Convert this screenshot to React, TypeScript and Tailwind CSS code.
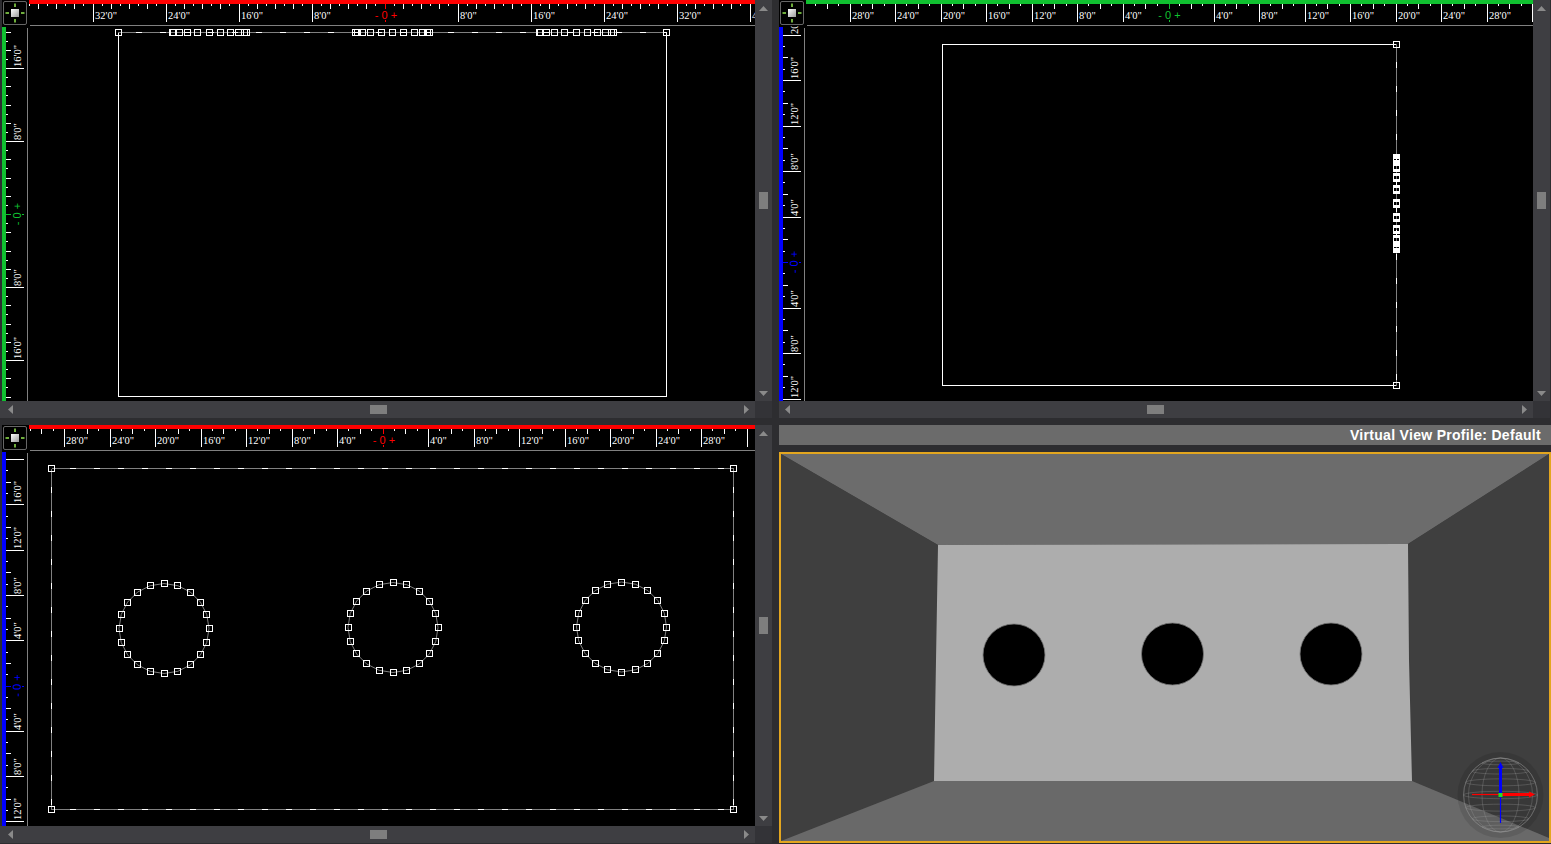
import React from 'react';

const GRAY = '#808080';
const textCls = "font-['Liberation_Serif',serif] text-[10.5px] fill-white";
const markCls = "font-['Liberation_Sans',sans-serif] text-[11px]";

function range(from: number, to: number) {
  return Array.from({ length: to - from + 1 }, (_, i) => from + i);
}

interface ScaleProps {
  center: number;
  step: number;
  unit: number;
  divs: number;
  color: string;
  barClass: string;
  hide?: number[];
}

function TopRuler({ x0, x1, y0, center, step, unit, divs, color, barClass, hide }: ScaleProps & { x0: number; x1: number; y0: number }) {
  const minor = step / divs;
  const n = Math.ceil((x1 - x0) / minor);
  const ticks = range(-n, n).filter((i) => {
    const x = center + i * minor;
    return x >= x0 && x < x1;
  });
  const majors = range(-12, 12).filter((k) => {
    const x = center + k * step;
    return k !== 0 && x >= x0 && x < x1;
  });
  return (
    <div className="flex-1 flex flex-col min-w-0">
      <div className={`h-[4px] shrink-0 ${barClass}`} />
      <svg className="block w-full h-[22px]" viewBox={`${x0} ${y0 + 4} ${x1 - x0} 22`} shapeRendering="crispEdges">
        {ticks.map((i) => {
          if (i % divs === 0) return null;
          const x = Math.floor(center + i * minor) + 0.5;
          return <line key={i} x1={x} x2={x} y1={y0 + 4} y2={y0 + (i % 2 === 0 ? 9 : 6)} stroke="#fff" />;
        })}
        {majors.map((k) => {
          const x = Math.floor(center + k * step) + 0.5;
          return (
            <g key={k}>
              <line x1={x} x2={x} y1={y0 + 4} y2={y0 + 22} stroke="#fff" />
              {!hide?.includes(k) && (
                <text x={x + 1.5} y={y0 + 19} className={textCls} shapeRendering="auto">{`${Math.abs(k) * unit}'0"`}</text>
              )}
            </g>
          );
        })}
        <line x1={center + 0.5} x2={center + 0.5} y1={y0 + 4} y2={y0 + 9} stroke={color} />
        <line x1={center + 0.5} x2={center + 0.5} y1={y0 + 20} y2={y0 + 22} stroke={color} />
        <text x={center + 1} y={y0 + 19} textAnchor="middle" xmlSpace="preserve" className={markCls} fill={color} shapeRendering="auto">- 0 +</text>
        <line x1={x0 + 1} x2={x1} y1={y0 + 25.5} y2={y0 + 25.5} stroke={GRAY} />
      </svg>
    </div>
  );
}

function LeftRuler({ y0, height, center, step, unit, divs, color, hide }: ScaleProps & { y0: number; height: number }) {
  const minor = step / divs;
  const n = Math.ceil(height / minor) + 40;
  const ticks = range(-n, n).filter((i) => {
    const y = center + i * minor;
    return y >= y0 && y < y0 + height;
  });
  const majors = range(-12, 12).filter((k) => {
    const y = center + k * step;
    return k !== 0 && y >= y0 && y < y0 + height;
  });
  return (
    <svg className="block w-[26px] shrink-0" height={height} viewBox={`0 ${y0} 26 ${height}`} shapeRendering="crispEdges">
      <rect x={0} y={y0 + 1} width={4} height={height} fill={color} />
      <line x1={25.5} x2={25.5} y1={y0 + 2} y2={y0 + height} stroke={GRAY} />
      {ticks.map((i) => {
        if (i % divs === 0) return null;
        const y = Math.round(center + i * minor) + 0.5;
        return <line key={i} x1={4} x2={i % 2 === 0 ? 9 : 6} y1={y} y2={y} stroke="#fff" />;
      })}
      {majors.map((k) => {
        const y = Math.round(center + k * step) + 0.5;
        return (
          <g key={k}>
            <line x1={4} x2={22} y1={y} y2={y} stroke="#fff" />
            {!hide?.includes(k) && (
              <text transform={`rotate(-90 19 ${y - 1.5})`} x={19} y={y - 1.5} className={textCls} shapeRendering="auto">{`${Math.abs(k) * unit}'0"`}</text>
            )}
          </g>
        );
      })}
      <line x1={4} x2={9} y1={center + 0.5} y2={center + 0.5} stroke={color} />
      <line x1={20} x2={22} y1={center + 0.5} y2={center + 0.5} stroke={color} />
      <text transform={`rotate(-90 19 ${center})`} x={19} y={center} textAnchor="middle" className={markCls} fill={color} shapeRendering="auto">- 0 +</text>
    </svg>
  );
}

function CornerButton({ id }: { id: string }) {
  return (
    <div className="w-[27px] h-[26px] shrink-0 pl-[1px] pt-[1px]">
      <svg width="24" height="24" viewBox="0 0 24 24" className="block">
        <rect x="0.5" y="0.5" width="23" height="23" rx="1.5" fill="#000" stroke="#666" />
        <defs>
          <linearGradient id={id} x1="0" y1="0" x2="1" y2="1">
            <stop offset="0" stopColor="#fff" />
            <stop offset="1" stopColor="#9a9a9a" />
          </linearGradient>
        </defs>
        <rect x="8" y="8" width="8" height="8" fill={`url(#${id})`} />
        <g stroke="#6fae3c" strokeWidth="2">
          <line x1="12" x2="12" y1="2.5" y2="6" />
          <line x1="12" x2="12" y1="18" y2="21.5" />
          <line x1="2.5" x2="6" y1="12" y2="12" />
          <line x1="18" x2="21.5" y1="12" y2="12" />
        </g>
      </svg>
    </div>
  );
}

function Arrow({ dir }: { dir: 'up' | 'down' | 'left' | 'right' }) {
  const pts = {
    up: '0,5 9,5 4.5,0',
    down: '0,0 9,0 4.5,5',
    left: '5,0 5,9 0,4.5',
    right: '0,0 0,9 5,4.5',
  }[dir];
  const horizontal = dir === 'left' || dir === 'right';
  return (
    <svg width={horizontal ? 5 : 9} height={horizontal ? 9 : 5} className="block shrink-0" fill="#8a8a8a">
      <polygon points={pts} />
    </svg>
  );
}

function VScroll() {
  return (
    <div className="w-[17px] shrink-0 bg-[#3e3e42] flex flex-col items-center justify-between pt-[6px] pb-[5px]">
      <Arrow dir="up" />
      <div className="w-[9px] h-[17px] mb-[1px] bg-[#7e7e7e]" />
      <Arrow dir="down" />
    </div>
  );
}

function HScroll({ strip }: { strip?: boolean }) {
  return (
    <div className={`h-[17px] flex-1 bg-[#3e3e42] flex items-center justify-between pr-[6px] ${strip ? 'pl-[8px]' : 'pl-[6px]'}`}>
      <Arrow dir="left" />
      <div className={`w-[17px] h-[9px] bg-[#7e7e7e] ${strip ? '' : 'mr-[2px]'}`} />
      <Arrow dir="right" />
    </div>
  );
}

function Handle({ x, y }: { x: number; y: number }) {
  return <rect x={Math.floor(x) - 3 + 0.5} y={Math.floor(y) - 3 + 0.5} width={6} height={6} fill="none" stroke="#fff" />;
}

function DashedEdge({ x1, y1, x2, y2 }: { x1: number; y1: number; x2: number; y2: number }) {
  return (
    <g>
      <line x1={x1} y1={y1} x2={x2} y2={y2} stroke={GRAY} />
      <line x1={x1} y1={y1} x2={x2} y2={y2} stroke="#fff" strokeDasharray="6 18" strokeDashoffset="6" />
    </g>
  );
}

const ringAngles = range(0, 19).map((i) => (i * Math.PI) / 10);

interface ViewPaneProps {
  id: string;
  ox: number;
  oy: number;
  width: number;
  strip?: boolean;
  h: ScaleProps;
  v: ScaleProps;
  children: React.ReactNode;
}

function ViewPane({ id, ox, oy, width, strip, h, v, children }: ViewPaneProps) {
  const right = ox + width - (strip ? 19 : 17);
  return (
    <div className="flex flex-col">
      <div className="flex h-[401px]">
        {strip && <div className="w-[2px] shrink-0 bg-[#2d2d30]" />}
        <div className="flex-1 flex flex-col bg-black min-w-0">
          <div className="flex h-[26px]">
            <CornerButton id={id} />
            <TopRuler x0={ox + 27} x1={right} y0={oy} {...h} />
          </div>
          <div className="flex flex-1">
            <LeftRuler y0={oy + 26} height={375} {...v} />
            <svg className="block flex-1 h-[375px]" viewBox={`${ox + 26} ${oy + 26} ${right - ox - 26} 375`} shapeRendering="crispEdges">
              {children}
            </svg>
          </div>
        </div>
        <VScroll />
      </div>
      <div className="flex h-[17px]">
        <HScroll strip={strip} />
        <div className="w-[17px] bg-[#333337]" />
      </div>
    </div>
  );
}

function Compass() {
  const cx = 1500.5;
  const cy = 795;
  const r = 37;
  return (
    <g>
      <circle cx={cx} cy={cy} r={43} fill="#000" fillOpacity="0.1" />
      <g fill="none" stroke="#9a9a9a" strokeOpacity="0.38" strokeWidth="0.8">
        <circle cx={cx} cy={cy} r={r} />
        {[30, 60, 85].map((a) => (
          <ellipse key={a} cx={cx} cy={cy} rx={r * Math.sin((a * Math.PI) / 180)} ry={r} />
        ))}
        {[-60, -40, -20, 0, 20, 40, 60].map((lat) => {
          const rad = (lat * Math.PI) / 180;
          return <ellipse key={lat} cx={cx} cy={cy + r * Math.sin(rad)} rx={r * Math.cos(rad)} ry={r * Math.cos(rad) * 0.1} />;
        })}
      </g>
      <line x1={1472} x2={1500} y1={cy - 0.5} y2={cy - 0.5} stroke="#ff0000" strokeWidth="1.2" />
      <line x1={1500} x2={1529} y1={cy - 0.5} y2={cy - 0.5} stroke="#ff0000" strokeWidth="3" />
      <polygon points="1529,791.5 1535,794.5 1529,797.5" fill="#ff0000" />
      <line x1={cx} x2={cx} y1={cy} y2={823} stroke="#0000ff" strokeWidth="1.2" />
      <line x1={cx} x2={cx} y1={768} y2={cy} stroke="#0000ff" strokeWidth="3" />
      <polygon points="1497.5,768 1500.5,762 1503.5,768" fill="#0000ff" />
      <rect x={1498.5} y={793} width={4} height={4} fill="#22e022" />
    </g>
  );
}

function VirtualView() {
  const holes = [
    { x: 1014, y: 655 },
    { x: 1172.5, y: 654 },
    { x: 1331, y: 654 },
  ];
  return (
    <div className="h-[391px] mt-[7px] border-2 border-[#e3a61f] bg-[#3f3f3f]">
      <svg className="block w-full h-full" viewBox="781 454 768 387">
        <polygon points="781,454 1549,454 1408,544 938,545" fill="#6c6c6c" />
        <polygon points="781,454 938,545 934,781 781,841" fill="#3f3f3f" />
        <polygon points="1549,454 1408,544 1412,781 1549,838" fill="#3f3f3f" />
        <polygon points="934,781 1412,781 1549,838 1549,841 781,841" fill="#696969" />
        <polygon points="938,545 1408,544 1409,660 1412,781 934,781 936,660" fill="#adadad" />
        {holes.map((c) => (
          <circle key={c.x} cx={c.x} cy={c.y} r={31} fill="#000" stroke="#777" strokeWidth="0.8" />
        ))}
        <Compass />
      </svg>
    </div>
  );
}

export default function App() {
  const rings = [
    { x: 209, bx: 164, y: 628.5, dy: 1 },
    { x: 392.5, bx: 393, y: 627.5, dy: 0 },
    { x: 576, bx: 621.5, y: 627, dy: -1 },
  ];
  return (
    <div className="w-[1551px] h-[844px] overflow-hidden bg-[#2d2d30] grid grid-cols-[772px_772px] grid-rows-[418px_419px] gap-[7px]">
      <ViewPane
        id="knob-top"
        ox={2}
        oy={0}
        width={772}
        strip
        h={{ center: 385, step: 73, unit: 8, divs: 8, color: '#ff0000', barClass: 'bg-[#ff0000]' }}
        v={{ center: 214, step: 73, unit: 8, divs: 8, color: '#10c030', barClass: 'bg-[#10c030]' }}
      >
        <polyline points="118.5,32.5 118.5,396.5 666.5,396.5 666.5,32.5" fill="none" stroke="#fff" />
        <DashedEdge x1={118} y1={32.5} x2={667} y2={32.5} />
        <Handle x={118.5} y={32.5} />
        <Handle x={666.5} y={32.5} />
        {rings.map((r) => ringAngles.map((a, i) => <Handle key={`${r.x}-${i}`} x={r.x + 37 * Math.sin(a)} y={32.5} />))}
      </ViewPane>

      <div className="w-[771px]">
        <ViewPane
          id="knob-side"
          ox={779}
          oy={0}
          width={771}
          h={{ center: 1168.5, step: 45.5, unit: 4, divs: 4, color: '#10c030', barClass: 'bg-[#10c030]', hide: [8] }}
          v={{ center: 262, step: 45.5, unit: 4, divs: 4, color: '#0000ff', barClass: 'bg-[#0000ff]' }}
        >
          <polyline points="1396.5,44.5 942.5,44.5 942.5,385.5 1396.5,385.5" fill="none" stroke="#fff" />
          <DashedEdge x1={1396.5} y1={44} x2={1396.5} y2={386} />
          <Handle x={1396.5} y={44.5} />
          <Handle x={1396.5} y={385.5} />
          {rings.map((r) =>
            ringAngles.map((a, i) => <Handle key={`${r.x}-${i}`} x={1396.5} y={203.5 + r.dy + 45 * Math.cos(a)} />)
          )}
        </ViewPane>
      </div>

      <ViewPane
        id="knob-front"
        ox={2}
        oy={425}
        width={772}
        strip
        h={{ center: 383, step: 45.5, unit: 4, divs: 4, color: '#ff0000', barClass: 'bg-[#ff0000]', hide: [8] }}
        v={{ center: 685.5, step: 45.3, unit: 4, divs: 4, color: '#0000ff', barClass: 'bg-[#0000ff]', hide: [-5] }}
      >
        <DashedEdge x1={51.5} y1={468.5} x2={733.5} y2={468.5} />
        <DashedEdge x1={51.5} y1={809.5} x2={733.5} y2={809.5} />
        <DashedEdge x1={51.5} y1={468.5} x2={51.5} y2={809.5} />
        <DashedEdge x1={733.5} y1={468.5} x2={733.5} y2={809.5} />
        <Handle x={51.5} y={468.5} />
        <Handle x={733.5} y={468.5} />
        <Handle x={51.5} y={809.5} />
        <Handle x={733.5} y={809.5} />
        {rings.map((r) => (
          <g key={r.x}>
            <polygon
              points={ringAngles.map((a) => `${r.bx + 45 * Math.sin(a)},${r.y - 45 * Math.cos(a)}`).join(' ')}
              fill="none"
              stroke={GRAY}
              shapeRendering="auto"
            />
            {ringAngles.map((a, i) => (
              <Handle key={i} x={r.bx + 45 * Math.sin(a)} y={r.y - 45 * Math.cos(a)} />
            ))}
          </g>
        ))}
      </ViewPane>

      <div className="flex flex-col">
        <div className="h-[20px] bg-[#6b6b6b] flex items-center justify-end pr-[10px] font-['Liberation_Sans',sans-serif] text-[14px] font-bold tracking-[0.3px] text-white">
          Virtual View Profile: Default
        </div>
        <VirtualView />
      </div>
    </div>
  );
}
